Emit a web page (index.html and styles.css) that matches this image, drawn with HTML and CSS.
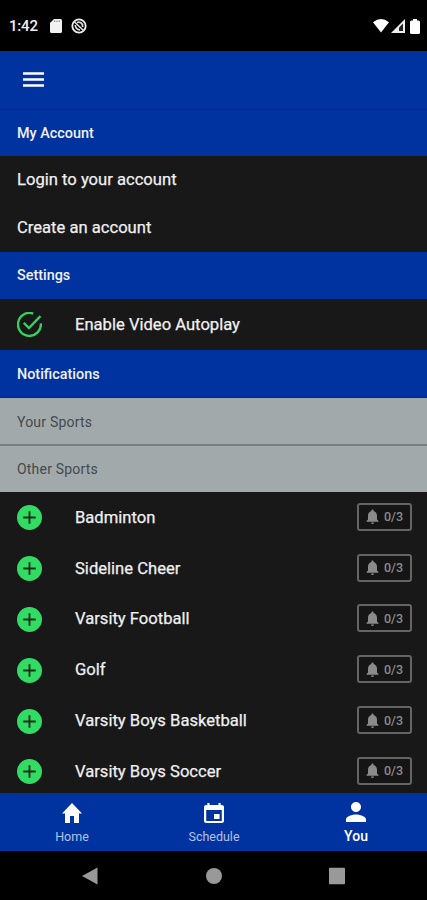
FILE: index.html
```html
<!DOCTYPE html>
<html lang="en">
<head>
<meta charset="utf-8">
<title>You</title>
<link rel="stylesheet" href="styles.css">
</head>
<body>
<svg class="defs" aria-hidden="true">
  <symbol id="plus" viewBox="0 0 24 24"><circle cx="12" cy="12" r="12" fill="#32dc64"/><path d="M12 6v12M6 12h12" stroke="#10301a" stroke-width="1.8"/></symbol>
  <symbol id="bell" viewBox="4 2 16 20"><path fill="currentColor" d="M12 22c1.1 0 2-.9 2-2h-4c0 1.100.9 2 2 2zm6-6v-5c0-3.070-1.640-5.640-4.500-6.320V4c0-.83-.67-1.500-1.500-1.500s-1.500.67-1.500 1.500v.68C7.630 5.360 6 7.920 6 11v5l-2 2v1h16v-1l-2-2z"/></symbol>
</svg>
<div class="status">
  <span class="clock">1:42</span>
  <svg class="sd" viewBox="0 0 12 14"><path d="M4 0h6.500Q12 0 12 1.500v11Q12 14 10.500 14h-9Q0 14 0 12.500V4z" fill="#f2f2f2"/><path d="M4.700 1.500v1.500M7 1.500v1.500M9.300 1.500v1.500" stroke="#777"/></svg>
  <svg class="sync" viewBox="0 0 16 16"><circle cx="8" cy="8" r="6.700" fill="none" stroke="#eee" stroke-width="1.800"/><path d="M3 3.500l10 9.500M6 4.500Q9.500 3 11.500 6.500v2.500M4.300 7Q4.500 11.500 9 11.800" fill="none" stroke="#ddd" stroke-width="1.700"/></svg>
  <svg class="wifi" viewBox="0 0 16 14"><path d="M0 3.200Q8-3 16 3.200L8 13.500z" fill="#fff"/></svg>
  <svg class="cell" viewBox="0 0 14 14"><path d="M14 0v14H0z" fill="#eee"/><path d="M12 4.500V12H8V8.500z" fill="#222"/></svg>
  <svg class="battery" viewBox="0 0 10 15"><path d="M3 0h4v1.500h1.500Q10 1.500 10 3v10.500Q10 15 8.500 15h-7Q0 15 0 13.500V3q0-1.500 1.500-1.500H3z" fill="#fff"/></svg>
</div>
<header class="topbar">
  <svg class="menu" viewBox="0 0 21 15"><path d="M0 1.500h21M0 7.500h21M0 13.500h21" stroke="#fff" stroke-width="2.400"/></svg>
</header>
<main>
  <h2 class="section account">My Account</h2>
  <div class="link">Login to your account</div>
  <div class="link">Create an account</div>
  <h2 class="section">Settings</h2>
  <div class="row autoplay">
    <svg class="icon" viewBox="0 0 24 24" fill="none" stroke="#38ce62" stroke-width="2.300"><path d="M15.500 1.500A11 11 0 1 0 22.900 11"/><path d="M6.500 10.500l5 5L22.500 4"/></svg>
    <span class="name">Enable Video Autoplay</span>
  </div>
  <h2 class="section notify">Notifications</h2>
  <h3 class="group yours">Your Sports</h3>
  <h3 class="group">Other Sports</h3>
  <div class="list">
    <div class="row"><svg class="icon"><use href="#plus"/></svg><span class="name">Badminton</span><span class="badge"><svg><use href="#bell"/></svg>0/3</span></div>
    <div class="row"><svg class="icon"><use href="#plus"/></svg><span class="name">Sideline Cheer</span><span class="badge"><svg><use href="#bell"/></svg>0/3</span></div>
    <div class="row"><svg class="icon"><use href="#plus"/></svg><span class="name">Varsity Football</span><span class="badge"><svg><use href="#bell"/></svg>0/3</span></div>
    <div class="row"><svg class="icon"><use href="#plus"/></svg><span class="name">Golf</span><span class="badge"><svg><use href="#bell"/></svg>0/3</span></div>
    <div class="row"><svg class="icon"><use href="#plus"/></svg><span class="name">Varsity Boys Basketball</span><span class="badge"><svg><use href="#bell"/></svg>0/3</span></div>
    <div class="row"><svg class="icon"><use href="#plus"/></svg><span class="name">Varsity Boys Soccer</span><span class="badge"><svg><use href="#bell"/></svg>0/3</span></div>
  </div>
</main>
<nav class="tabs">
  <div class="tab"><svg viewBox="2 3 20 17" preserveAspectRatio="none"><path fill="#fff" d="M10 20v-6h4v6h5v-8h3L12 3 2 12h3v8z"/></svg><span>Home</span></div>
  <div class="tab"><svg viewBox="3 1 18 20" preserveAspectRatio="none"><path fill="#fff" d="M17 12h-5v5h5v-5zM16 1v2H8V1H6v2H5c-1.110 0-1.990.9-1.990 2L3 19c0 1.100.89 2 2 2h14c1.100 0 2-.9 2-2V5c0-1.100-.9-2-2-2h-1V1h-2zm3 18H5V8h14v11z"/></svg><span>Schedule</span></div>
  <div class="tab active"><svg viewBox="4 4 16 16"><path fill="#fff" d="M12 12c2.210 0 4-1.790 4-4s-1.790-4-4-4-4 1.790-4 4 1.790 4 4 4zm0 2c-2.670 0-8 1.340-8 4v2h16v-2c0-2.660-5.330-4-8-4z"/></svg><span>You</span></div>
</nav>
<footer class="sysbar">
  <svg viewBox="0 0 18 18"><path d="M16.500 .5v17L1 9z"/></svg>
  <svg viewBox="0 0 18 18"><circle cx="9" cy="9" r="8"/></svg>
  <svg viewBox="0 0 18 18"><rect x="1" y=".7" width="16" height="16.600" rx="1"/></svg>
</footer>
</body>
</html>
```
FILE: styles.css
```css
* { box-sizing: border-box; }
body { margin: 0; width: 427px; height: 900px; overflow: hidden; display: flex; flex-direction: column; background: #181818; color: #f0f0f0; font-family: Roboto, sans-serif; }
h2, h3 { margin: 0; }
svg { display: block; flex: none; }
.defs { display: none; }
.status { height: 51px; flex: none; background: #000; display: flex; align-items: center; padding: 1px 7px 0 9px; }
.clock { font-size: 15px; font-weight: 500; width: 41px; letter-spacing: -.2px; }
.sd { width: 12px; height: 14px; }
.sync { width: 16px; height: 16px; margin-left: 9px; }
.wifi { width: 16px; height: 14px; margin-left: auto; }
.cell { width: 14px; height: 14px; margin-left: 2px; }
.battery { width: 10px; height: 15px; margin-left: 5px; }
.topbar { height: 59px; flex: none; background: #0032a0; border-bottom: 1px solid #002b7c; padding: 21px 0 0 23px; }
.menu { width: 21px; height: 15px; }
main { height: 683px; flex: none; overflow: hidden; }
.section { height: 47px; background: #0032a0; padding-left: 17px; font-size: 14.400px; font-weight: 500; line-height: 48px; }
.account { height: 46px; }
.notify { height: 48px; border-bottom: 1px solid #002783; line-height: 49px; }
.link { height: 48px; padding-left: 17px; font-size: 16.600px; line-height: 47px; -webkit-text-stroke: .25px; }
.group { height: 46px; background: #a1a9ab; color: #444a4d; padding-left: 17px; font-size: 14px; font-weight: 400; line-height: 47px; letter-spacing: .2px; }
.yours { height: 48px; border-bottom: 2px solid #798083; line-height: 48px; }
.list { padding-top: .5px; }
.row { height: 50.800px; display: flex; align-items: center; padding: 0 15px 0 17px; }
.autoplay { height: 51px; }
.icon { width: 25px; height: 25px; margin-right: 33px; }
.name { font-size: 16.600px; line-height: 20px; -webkit-text-stroke: .25px; }
.badge { margin: 0 0 2px auto; width: 55px; height: 28px; border: 2px solid #646464; border-radius: 3px; display: flex; align-items: center; padding-left: 7px; gap: 5px; font-size: 12.500px; font-weight: 500; color: #8b8b8b; background: #151515; }
.badge svg { width: 13px; height: 15px; }
.tabs { height: 58px; flex: none; background: #0032a0; display: grid; grid-template-columns: repeat(3, 1fr); padding-left: 1px; }
.tab { display: flex; flex-direction: column; align-items: center; padding-top: 10px; font-size: 12.500px; color: #b4c3e8; }
.tab svg { width: 20px; height: 20px; margin-bottom: 6px; }
.tab span { line-height: 16px; }
.active { padding-top: 9px; font-size: 14px; font-weight: 500; color: #fff; }
.sysbar { height: 49px; flex: none; background: #000; display: flex; justify-content: space-between; padding: 16px 81px 0; }
.sysbar svg { width: 18px; height: 18px; fill: #999; }
```
